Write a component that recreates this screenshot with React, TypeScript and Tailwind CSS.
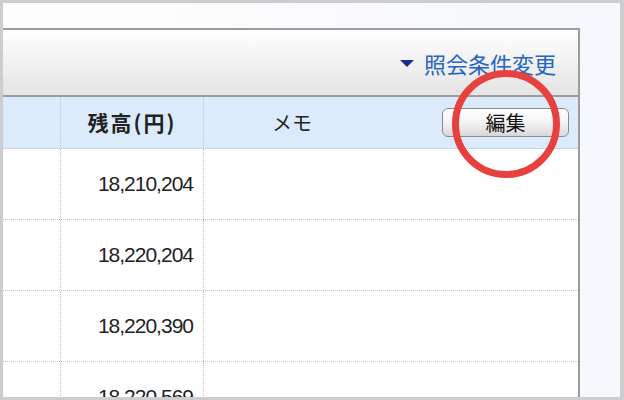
import React from 'react';

const ROWS = ['18,210,204', '18,220,204', '18,220,390', '18,220,569'];

const jp = { fontFamily: '"Noto Sans CJK JP", "Noto Sans", sans-serif' };
const num = { fontFamily: '"Liberation Sans", Arial, sans-serif' };

export default function App() {
  return (
    <div className="relative w-[624px] h-[400px] bg-[#cdcdcd] pt-[3px] pl-[3px] pr-[4px] pb-[3px]">
      <div className="h-full overflow-hidden flex bg-gradient-to-r from-[#fdfeff] to-[#f5f8fc]">
        {/* Panel */}
        <div className="mt-[25px] w-[577px] border-t-2 border-r-2 border-[#9c9c9c] bg-white flex flex-col">
          {/* Title bar */}
          <div className="h-[67px] shrink-0 bg-gradient-to-b from-white to-[#e4e4e4] border-b-2 border-[#9c9c9c] flex items-center justify-end pr-[22px]">
            <span className="w-0 h-0 border-l-[7px] border-r-[7px] border-t-[7px] border-l-transparent border-r-transparent border-t-[#1c2a8c] mr-[10px] mt-[1px]" />
            <span className="text-[22px] leading-none text-[#2563c4]" style={jp}>照会条件変更</span>
          </div>

          {/* Header row */}
          <div className="h-[52px] shrink-0 flex bg-[#dcebfb] border-b border-dotted border-[#b8c4d0]">
            <div className="w-[58px] border-r border-dotted border-[#c0c6cc]" />
            <div className="w-[143px] border-r border-dotted border-[#c0c6cc] flex items-center justify-center">
              <span className="text-[21px] font-semibold tracking-[2px] text-[#222]" style={jp}>残高(円)</span>
            </div>
            <div className="flex-1 flex items-center pl-[68px] pr-[9px]">
              <span className="text-[20px] text-[#222]" style={jp}>メモ</span>
              <button className="ml-auto w-[127px] h-[29px] rounded-[6px] border border-[#8a8a8a] bg-gradient-to-b from-white via-[#f4f4f4] to-[#d8d8d8] flex items-center justify-center shadow-[inset_0_1px_0_#fff]">
                <span className="text-[20px] leading-none text-[#111]" style={jp}>編集</span>
              </button>
            </div>
          </div>

          {/* Data rows */}
          {ROWS.map((v) => (
            <div key={v} className="h-[71px] shrink-0 flex border-b border-dotted border-[#c4c4c4]">
              <div className="w-[58px] border-r border-dotted border-[#c4c4c4]" />
              <div className="w-[143px] border-r border-dotted border-[#c4c4c4] flex items-center justify-end pr-[10px]">
                <span className="text-[21px] tracking-[-1px] text-[#222]" style={num}>{v}</span>
              </div>
              <div className="flex-1" />
            </div>
          ))}
        </div>
      </div>

      {/* Red highlight circle */}
      <div className="absolute left-[452px] top-[70px] w-[108px] h-[108px] rounded-full border-[7px] border-[#e8403f]" />
    </div>
  );
}
